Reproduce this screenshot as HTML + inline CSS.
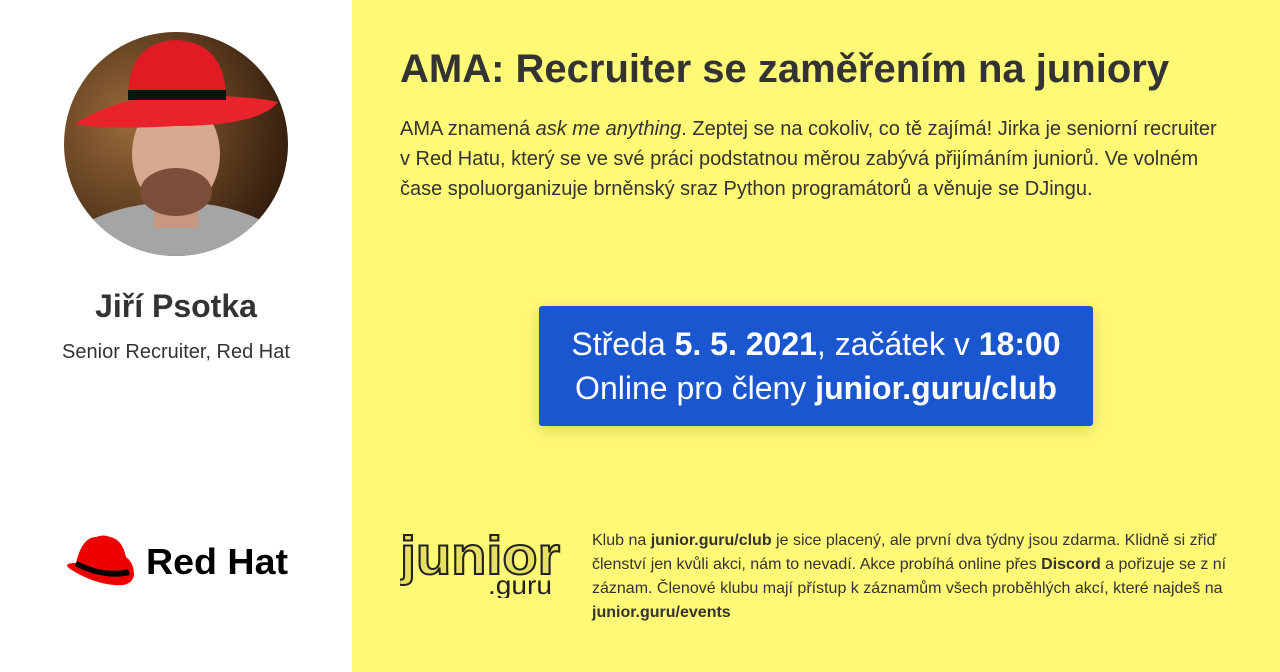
<!DOCTYPE html>
<html><head><meta charset="utf-8"><style>
body{margin:0;width:1280px;height:672px;overflow:hidden;font-family:"Liberation Sans",sans-serif;color:#333;position:relative}
.left{position:absolute;left:0;top:0;width:352px;height:672px;background:#fff}
.right{position:absolute;left:352px;top:0;width:928px;height:672px;background:#fff975}
.av{position:absolute;left:64px;top:32px;width:224px;height:224px;border-radius:50%;overflow:hidden}
h2{position:absolute;left:0;width:352px;top:288px;margin:0;text-align:center;font-size:32px}
.role{position:absolute;left:0;width:352px;top:341px;text-align:center;font-size:20px}
h1{position:absolute;left:400px;top:47px;margin:0;font-size:40px;white-space:nowrap}
.desc{position:absolute;left:400px;top:114px;width:830px;font-size:20px;line-height:30px}
.box{position:absolute;left:539px;top:306px;width:554px;height:120px;background:#1a56d0;color:#fff;border-radius:3px;box-shadow:0 4px 16px rgba(0,0,0,.15);text-align:center;font-size:32px;line-height:44px;padding-top:16px;box-sizing:border-box}
.foot{position:absolute;left:592px;top:529px;width:640px;font-size:16px;line-height:24px}
</style></head><body>
<div class="left">
<div class="av"><svg width="224" height="224" viewBox="0 0 224 224">
<defs><radialGradient id="g" cx="0.3" cy="0.4" r="0.8"><stop offset="0" stop-color="#9a6a3a"/><stop offset="1" stop-color="#2a1608"/></radialGradient></defs>
<rect width="224" height="224" fill="url(#g)"/>
<ellipse cx="112" cy="245" rx="130" ry="75" fill="#a4a6a6"/>
<rect x="90" y="160" width="44" height="36" fill="#c99680"/>
<ellipse cx="112" cy="122" rx="44" ry="56" fill="#d8a890"/>
<ellipse cx="112" cy="160" rx="36" ry="24" fill="#7a4e38"/>
<path d="M64 62 Q66 10 112 8 Q160 10 162 64 Z" fill="#e01b24"/>
<path d="M10 92 Q60 62 112 64 Q175 62 214 70 Q195 94 112 94 Q45 98 10 92Z" fill="#e8232b"/>
<rect x="64" y="58" width="98" height="10" fill="#111"/>
</svg></div>
<h2>Jiří Psotka</h2>
<div class="role">Senior Recruiter, Red Hat</div>
<svg style="position:absolute;left:64px;top:533px" width="230" height="56" viewBox="0 0 230 56">
<path d="M12 30 Q18 4 32 4 Q40 1 46 4 Q58 6 62 24 Q70 30 70 42 Q68 54 50 52 Q28 50 6 36 Q-2 30 12 30Z" fill="#e00"/>
<path d="M13 28 Q40 42 64 36 L66 42 Q40 48 11 33Z" fill="#000"/>
<text x="82" y="41" font-family="Liberation Sans" font-weight="bold" font-size="36" fill="#000" textLength="142" lengthAdjust="spacingAndGlyphs">Red Hat</text>
</svg>
</div>
<div class="right"></div>
<h1>AMA: Recruiter se zaměřením na juniory</h1>
<div class="desc">AMA znamená <i>ask me anything</i>. Zeptej se na cokoliv, co tě zajímá! Jirka je seniorní recruiter v Red Hatu, který se ve své práci podstatnou měrou zabývá přijímáním juniorů. Ve volném čase spoluorganizuje brněnský sraz Python programátorů a věnuje se DJingu.</div>
<div class="box">Středa <b>5. 5. 2021</b>, začátek v <b>18:00</b><br>Online pro členy <b>junior.guru/club</b></div>
<svg style="position:absolute;left:400px;top:526px" width="162" height="72" viewBox="0 0 162 72">
<text x="0" y="48" font-family="Liberation Sans" font-weight="bold" font-size="54" fill="#e8e060" stroke="#222" stroke-width="2" textLength="160" lengthAdjust="spacingAndGlyphs">junior</text>
<text x="88" y="68" font-family="Liberation Sans" font-size="26" fill="#222" textLength="64" lengthAdjust="spacingAndGlyphs">.guru</text>
</svg>
<div class="foot">Klub na <b>junior.guru/club</b> je sice placený, ale první dva týdny jsou zdarma. Klidně si zřiď členství jen kvůli akci, nám to nevadí. Akce probíhá online přes <b>Discord</b> a pořizuje se z ní záznam. Členové klubu mají přístup k záznamům všech proběhlých akcí, které najdeš na <b>junior.guru/events</b></div>
</body></html>
